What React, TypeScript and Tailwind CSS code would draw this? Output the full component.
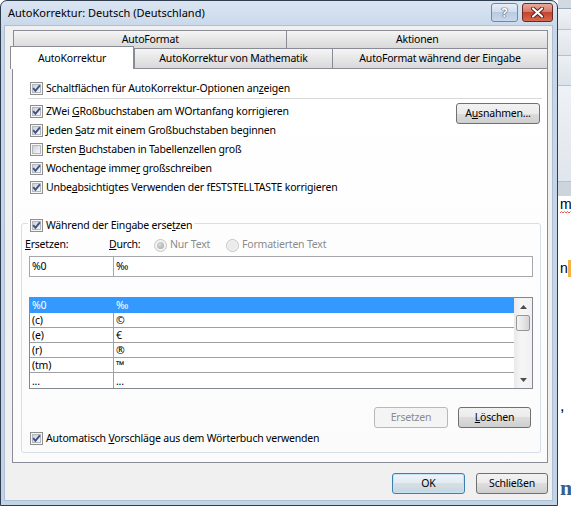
import React from "react";

type Kids = { children?: React.ReactNode };

function CheckBox({ checked }: { checked: boolean }) {
  return (
    <span className="relative flex h-[13px] w-[13px] shrink-0 items-center justify-center border border-[#8e8f8f] bg-[#f6f6f6]">
      <span className="h-[9px] w-[9px] border border-[#b4b8be] bg-[linear-gradient(135deg,#cdd1d6,#f7f7f7)]" />
      {checked && (
        <svg viewBox="0 0 11 11" className="absolute left-0 top-0 h-[11px] w-[11px]">
          <path d="M2.2 5.2 L4.4 7.8 L8.9 2.3" fill="none" stroke="#3e5183" strokeWidth="1.9" />
        </svg>
      )}
    </span>
  );
}

function Radio({ checked }: { checked?: boolean }) {
  return (
    <span className="flex h-[13px] w-[13px] shrink-0 items-center justify-center rounded-full border border-[#c4c4c4] bg-[#f3f3f3]">
      {checked ? (
        <span className="h-[7px] w-[7px] rounded-full bg-[radial-gradient(circle_at_40%_35%,#dadada,#a4a4a4)]" />
      ) : (
        <span className="h-[9px] w-[9px] rounded-full bg-[#ebebeb]" />
      )}
    </span>
  );
}

function CheckRow({ checked = true, className = "h-[19px]", children }: Kids & { checked?: boolean; className?: string }) {
  return (
    <div className={`flex items-center gap-[3px] ${className}`}>
      <CheckBox checked={checked} />
      <span className="whitespace-nowrap">{children}</span>
    </div>
  );
}

function Button({ className = "", disabled, primary, children }: Kids & { className?: string; disabled?: boolean; primary?: boolean }) {
  let look =
    "border-[#707070] bg-[linear-gradient(#f2f2f2,#ebebeb_50%,#dddddd_50%,#cfcfcf)] text-black";
  if (disabled) look = "border-[#b5b9bc] bg-[#f4f4f4] text-[#8b8b8b]";
  if (primary)
    look =
      "border-[#3c7fb1] bg-[linear-gradient(#eef4f8,#e3ebf0_50%,#d5dfe6_50%,#c9d6df)] text-black shadow-[inset_0_0_0_1px_#c2e4f6]";
  return (
    <div className={`flex h-[21px] shrink-0 items-center justify-center rounded-[3px] border ${look} ${className}`}>
      {children}
    </div>
  );
}

const tabIdle =
  "flex items-center justify-center border border-[#898c95] bg-[linear-gradient(#f5f5f5,#e6e6e6_50%,#d9d9d9)] whitespace-nowrap";

const entries: [string, string][] = [
  ["%0", "‰"],
  ["(c)", "©"],
  ["(e)", "€"],
  ["(r)", "®"],
  ["(tm)", "™"],
  ["...", "..."],
];

function EntryList() {
  return (
    <div className="ml-[7px] mt-[20px] flex h-[92px] w-[504px] border border-[#828790] bg-white">
      <div className="flex w-[484px] flex-col">
        {entries.map(([a, b], i) => {
          const sel = i === 0;
          const last = i === entries.length - 1;
          return (
            <div
              key={a}
              className={`flex h-[15px] items-center leading-[14px] ${last ? "" : "border-b"} ${
                sel ? "border-[#3399ff] bg-[#3399ff] text-white" : "border-[#a0a0a0]"
              }`}
            >
              <div className={`flex h-full w-[84px] items-center border-r pl-[2px] ${sel ? "border-[#3399ff]" : "border-[#a0a0a0]"}`}>
                {a}
              </div>
              <div className="pl-[2px]">{b}</div>
            </div>
          );
        })}
      </div>
      {/* scrollbar */}
      <div className="flex w-[18px] flex-col items-center bg-[linear-gradient(90deg,#e9e9e9,#f6f6f6_40%,#f1f1f1)]">
        <div className="flex h-[17px] w-full items-center justify-center">
          <svg width="7" height="4" viewBox="0 0 7 4">
            <path d="M0 4 L3.5 0 L7 4 Z" fill="#4d4d4d" />
          </svg>
        </div>
        <div className="flex h-[16px] w-[14px] items-center justify-center rounded-[2px] border border-[#979797] bg-[linear-gradient(90deg,#f4f4f4,#e6e6e6_50%,#d4d4d4)]" />
        <div className="flex-1" />
        <div className="flex h-[17px] w-full items-center justify-center">
          <svg width="7" height="4" viewBox="0 0 7 4">
            <path d="M0 0 L3.5 4 L7 0 Z" fill="#4d4d4d" />
          </svg>
        </div>
      </div>
    </div>
  );
}

function ReplaceGroup() {
  return (
    <div className="ml-[8px] mt-[26px] flex h-[230px] w-[520px] flex-col rounded-[3px] border border-[#d5dfe5]">
      <div className="-mt-[6px] ml-[6px] flex h-[15px] w-fit items-center gap-[3px] bg-white px-[2px]">
        <CheckBox checked />
        <span className="whitespace-nowrap">
          Während der Eingabe erse<u>t</u>zen
        </span>
      </div>

      <div className="mt-[4px] flex h-[16px] items-center pl-[3px]">
        <span className="w-[84px]">
          <u>E</u>rsetzen:
        </span>
        <span className="w-[45px]">
          <u>D</u>urch:
        </span>
        <Radio checked />
        <span className="ml-[3px] w-[56px] text-[#8b8b8b]">Nur Text</span>
        <Radio />
        <span className="ml-[3px] text-[#8b8b8b]">Formatierten Text</span>
      </div>

      <div className="mt-[3px] flex pl-[7px]">
        <div className="flex h-[21px] w-[85px] items-center border border-[#a5a7ad] bg-white pl-[2px]">%0</div>
        <div className="-ml-px flex h-[21px] w-[420px] items-center border border-[#a5a7ad] bg-white pl-[2px]">‰</div>
      </div>

      <EntryList />

      <div className="mt-[18px] flex justify-end gap-[10px] pr-[9px]">
        <Button disabled className="w-[74px]">
          Ersetzen
        </Button>
        <Button className="w-[73px]">
          <span>
            <u>L</u>öschen
          </span>
        </Button>
      </div>

      <div className="mt-[2px] pl-[8px]">
        <CheckRow className="h-[17px]">
          Automatisch <u>V</u>orschläge aus dem Wörterbuch verwenden
        </CheckRow>
      </div>
    </div>
  );
}

function TabStrip() {
  return (
    <div className="flex flex-col">
      <div className="flex h-[19px] pl-[1px]">
        <div className={`${tabIdle} w-[275px]`}>AutoFormat</div>
        <div className={`${tabIdle} -ml-px w-[262px]`}>Aktionen</div>
      </div>
      <div className="-mt-px flex h-[20px] items-end">
        <div className="relative z-10 -mb-px -ml-[2px] flex h-[23px] w-[124px] items-center justify-center border border-b-0 border-[#898c95] bg-white pt-[1px]">
          AutoKorrektur
        </div>
        <div className={`${tabIdle} h-[20px] w-[199px] border-b-0`}>AutoKorrektur von Mathematik</div>
        <div className={`${tabIdle} -ml-px h-[20px] w-[216px] border-b-0`}>AutoFormat während der Eingabe</div>
      </div>
    </div>
  );
}

function TitleBar() {
  return (
    <div className="flex h-[25px] shrink-0 items-start">
      <div className="flex h-[25px] items-center pl-[7px] text-[11px] tracking-normal text-black">AutoKorrektur: Deutsch (Deutschland)</div>
      <div className="ml-auto mr-[4px] mt-[2px] flex gap-[4px]">
        <div className="flex h-[19px] w-[27px] items-center justify-center rounded-[3px] border border-[#7189a8] bg-[linear-gradient(#e6eef8,#cfdcec_50%,#b9cbe2_50%,#c8d8ec)] text-[13px] font-bold leading-none text-white [text-shadow:0_0_1px_#3f4f66,0_0_1px_#3f4f66,0_0_1px_#3f4f66]">
          ?
        </div>
        <div className="flex h-[19px] w-[31px] items-center justify-center rounded-[3px] border border-[#6b2a22] bg-[linear-gradient(#e9a99b,#d47564_50%,#c3432f_50%,#d46a4f)]">
          <svg width="13" height="11" viewBox="0 0 13 11">
            <path d="M2 1.5 L11 9.5 M11 1.5 L2 9.5" stroke="#5a1c14" strokeWidth="4" strokeLinecap="round" />
            <path d="M2 1.5 L11 9.5 M11 1.5 L2 9.5" stroke="#ffffff" strokeWidth="2.2" strokeLinecap="round" />
          </svg>
        </div>
      </div>
    </div>
  );
}

function Backdrop() {
  return (
    <div className="flex w-[13px] flex-col overflow-hidden bg-white font-['Liberation_Sans',sans-serif] tracking-normal">
      <div className="h-[9px] border-b border-[#9aa6b5] bg-[#d3d9e1]" />
      <div className="h-[21px] border-b border-[#b7c1cd] bg-[linear-gradient(#f1f3f6,#e1e6ec)]" />
      <div className="h-[26px] border-b border-[#b7c1cd] bg-[linear-gradient(#eef1f4,#dfe4ea)]" />
      <div className="h-[30px] border-b border-[#b7c1cd] bg-[linear-gradient(#edf0f4,#dce2e9)]" />
      <div className="h-[96px] border-b border-[#b7c1cd] bg-[linear-gradient(#eef1f5,#e1e6ec)]" />
      <div className="h-[14px] bg-[#cdd4dc]" />
      <div className="flex flex-1 flex-col pl-[2px]">
        <div className="mt-[2px] h-[13px] text-[14px] leading-[13px] text-black">m</div>
        <svg width="11" height="3" viewBox="0 0 11 3">
          <path d="M0 2 L1.5 0.5 L3 2 L4.5 0.5 L6 2 L7.5 0.5 L9 2 L10.5 0.5" fill="none" stroke="#e03030" strokeWidth="0.8" />
        </svg>
        <div className="mt-[46px] flex h-[17px] items-center text-[14px] leading-[17px] text-black">
          n<span className="w-[3px] bg-[#f6b24a] text-[#f6b24a]">l</span>
        </div>
        <div className="mt-[122px] h-[14px] text-[16px] leading-[14px] text-black">,</div>
        <div className="mt-[62px] font-['Liberation_Serif',serif] text-[22px] font-bold leading-[26px] text-[#365f91]">n</div>
      </div>
    </div>
  );
}

export default function App() {
  return (
    <div className="flex h-[508px] w-[571px] overflow-hidden bg-white font-['Noto_Sans',sans-serif] text-[10.5px] tracking-[-0.2px] text-black">
      <div className="flex h-[506px] w-[558px] shrink-0 flex-col rounded-t-[7px] border border-[#2f3d4f] bg-[linear-gradient(#dae5f2,#c6d6e9_30px,#c3d3e6)]">
        <TitleBar />
        <div className="mb-[5px] ml-[4px] mr-[5px] flex flex-1 flex-col bg-[#f0f0f0] pl-[7px] pt-[4px] shadow-[0_0_0_1px_#aebfd4]">
          <div className="flex w-[536px] flex-col">
            <TabStrip />
            <div className="flex h-[395px] flex-col border border-[#898c95] bg-[linear-gradient(#ffffff,#fbfbfb)]">
              <div className="pl-[17px] pt-[10px]">
                <CheckRow>
                  Schaltflächen für AutoKorrektur-Optionen an<u>z</u>eigen
                </CheckRow>
              </div>
              <div className="ml-[15px] mr-[5px] h-px bg-[#d8d8d8]" />
              <div className="mt-[3px] flex pl-[17px] pr-[7px]">
                <div className="flex flex-1 flex-col">
                  <CheckRow>
                    ZWei <u>G</u>Roßbuchstaben am WOrtanfang korrigieren
                  </CheckRow>
                  <CheckRow>
                    Jeden <u>S</u>atz mit einem Großbuchstaben beginnen
                  </CheckRow>
                  <CheckRow checked={false}>
                    Ersten <u>B</u>uchstaben in Tabellenzellen groß
                  </CheckRow>
                  <CheckRow>
                    Wochentage imme<u>r</u> großschreiben
                  </CheckRow>
                  <CheckRow>
                    Unbe<u>a</u>bsichtigtes Verwenden der fESTSTELLTASTE korrigieren
                  </CheckRow>
                </div>
                <Button className="mt-[1px] w-[84px]">
                  <span>
                    A<u>u</u>snahmen...
                  </span>
                </Button>
              </div>
              <ReplaceGroup />
            </div>
            <div className="mt-[10px] flex justify-end gap-[11px]">
              <Button primary className="w-[73px]">
                OK
              </Button>
              <Button className="w-[72px]">Schließen</Button>
            </div>
          </div>
        </div>
      </div>
      <Backdrop />
    </div>
  );
}
